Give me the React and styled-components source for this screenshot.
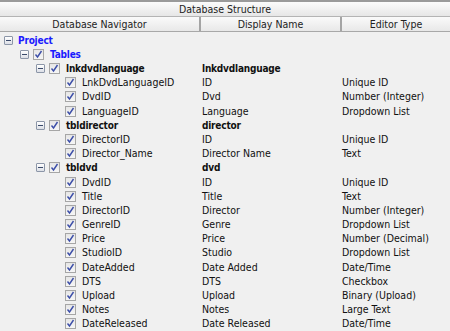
import React from 'react'
import styled, { createGlobalStyle } from 'styled-components'

const FONT = `"DejaVu Sans Condensed", "Liberation Sans", sans-serif`

const Global = createGlobalStyle`
html, body {
  margin: 0;
  padding: 0;
  background: #f0f0f0;
}
body {
  font-family: ${FONT};
  font-size: 10.5px;
}
`

const Panel = styled.div`
width: 450px;
height: 331px;
overflow: hidden;
background: #f0f0f0;
display: flex;
flex-direction: column;
`

const Caption = styled.div`
height: 14px;
border-top: 2px solid #9a9a9a;
border-bottom: 1px solid #b4b4b4;
background: linear-gradient(#fbfbfb, #e6e6e6);
display: flex;
align-items: center;
justify-content: center;
color: #222;
font-family: ${FONT};
font-size: 10.5px;
`

const HeaderRow = styled.div`
display: grid;
grid-template-columns: 199px 141px 1fr;
height: 15px;
border-bottom: 1px solid #a8a8a8;
background: linear-gradient(#fafafa, #e8e8e8);
`

const HeaderCell = styled.div`
display: flex;
align-items: center;
justify-content: center;
color: #222;
font-family: ${FONT};
font-size: 10.5px;
border-left: ${p => (p.first ? 'none' : '2px solid #a4a4a4')};
`

const Body = styled.div`
padding-top: 1px;
`

const Row = styled.div`
display: grid;
grid-template-columns: 199px 141px 1fr;
height: 14.2px;
align-items: center;
font-family: ${FONT};
font-size: 10.5px;
line-height: 13px;
color: #111;
white-space: nowrap;
`

const NavCell = styled.div`
display: flex;
align-items: center;
padding-left: ${p => 4 + p.level * 16}px;
`

const Expander = styled.span`
box-sizing: border-box;
width: 9px;
height: 9px;
flex: none;
border: 1px solid ${p => (p.hidden ? 'transparent' : '#8c96a8')};
background: ${p => (p.hidden ? 'transparent' : 'linear-gradient(#ffffff, #dcdfe6)')};
border-radius: 1px;
display: flex;
align-items: center;
justify-content: center;
margin-right: ${p => (p.level === 0 ? 5 : 4)}px;
visibility: visible;
&::after {
  content: '';
  display: ${p => (p.hidden ? 'none' : 'block')};
  width: 5px;
  height: 1px;
  background: #3a4a6a;
}
`

const Check = styled.span`
box-sizing: border-box;
width: 11px;
height: 11px;
flex: none;
border: 1px solid #a6a6a6;
background: linear-gradient(#e6e6e6, #f6f6f6);
margin-right: 6px;
display: flex;
align-items: center;
justify-content: center;
`

const Label = styled.span`
font-weight: ${p => (p.bold ? 'bold' : 'normal')};
font-size: ${p => (p.bold ? '10px' : 'inherit')};
letter-spacing: ${p => (p.bold ? '-0.2px' : 'normal')};
color: ${p => (p.blue ? '#1a1aff' : '#111')};
`

const Cell = styled.div`
padding-left: ${p => p.pad}px;
font-weight: ${p => (p.bold ? 'bold' : 'normal')};
font-size: ${p => (p.bold ? '10px' : 'inherit')};
letter-spacing: ${p => (p.bold ? '-0.2px' : 'normal')};
`

const Tick = () => (
  <svg width="9" height="9" viewBox="0 0 9 9">
    <path d="M1.5 4.5 L3.5 7 L7.5 1" fill="none" stroke="#3c4ea8" strokeWidth="1.4" />
  </svg>
)

const rows = [
  { level: 0, name: 'Project', expand: true, blue: true, nocheck: true },
  { level: 1, name: 'Tables', expand: true, blue: true },
  { level: 2, name: 'lnkdvdlanguage', expand: true, bold: true, display: 'lnkdvdlanguage' },
  { level: 3, name: 'LnkDvdLanguageID', display: 'ID', type: 'Unique ID' },
  { level: 3, name: 'DvdID', display: 'Dvd', type: 'Number (Integer)' },
  { level: 3, name: 'LanguageID', display: 'Language', type: 'Dropdown List' },
  { level: 2, name: 'tbldirector', expand: true, bold: true, display: 'director' },
  { level: 3, name: 'DirectorID', display: 'ID', type: 'Unique ID' },
  { level: 3, name: 'Director_Name', display: 'Director Name', type: 'Text' },
  { level: 2, name: 'tbldvd', expand: true, bold: true, display: 'dvd' },
  { level: 3, name: 'DvdID', display: 'ID', type: 'Unique ID' },
  { level: 3, name: 'Title', display: 'Title', type: 'Text' },
  { level: 3, name: 'DirectorID', display: 'Director', type: 'Number (Integer)' },
  { level: 3, name: 'GenreID', display: 'Genre', type: 'Dropdown List' },
  { level: 3, name: 'Price', display: 'Price', type: 'Number (Decimal)' },
  { level: 3, name: 'StudioID', display: 'Studio', type: 'Dropdown List' },
  { level: 3, name: 'DateAdded', display: 'Date Added', type: 'Date/Time' },
  { level: 3, name: 'DTS', display: 'DTS', type: 'Checkbox' },
  { level: 3, name: 'Upload', display: 'Upload', type: 'Binary (Upload)' },
  { level: 3, name: 'Notes', display: 'Notes', type: 'Large Text' },
  { level: 3, name: 'DateReleased', display: 'Date Released', type: 'Date/Time' },
]

const App = () => {
  return (
    <Panel>
      <Global />
      <Caption>Database Structure</Caption>
      <HeaderRow>
        <HeaderCell first>Database Navigator</HeaderCell>
        <HeaderCell>Display Name</HeaderCell>
        <HeaderCell>Editor Type</HeaderCell>
      </HeaderRow>
      <Body>
        {rows.map((r, i) => (
          <Row key={i}>
            <NavCell level={r.level}>
              <Expander level={r.level} hidden={!r.expand} />
              {!r.nocheck && (
                <Check>
                  <Tick />
                </Check>
              )}
              <Label bold={r.bold || r.blue} blue={r.blue}>{r.name}</Label>
            </NavCell>
            <Cell pad={3} bold={r.bold}>{r.display}</Cell>
            <Cell pad={2}>{r.type}</Cell>
          </Row>
        ))}
      </Body>
    </Panel>
  )
}

export default App
